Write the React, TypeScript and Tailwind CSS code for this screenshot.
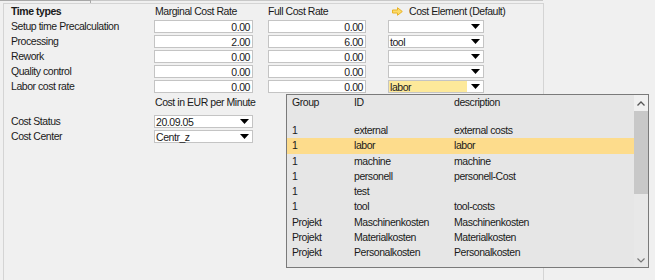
import React from "react";

const font = { fontFamily: '"Liberation Sans", Arial, sans-serif' };

function Arrow() {
  return (
    <svg width="9" height="5" viewBox="0 0 9 5" className="shrink-0">
      <polygon points="0,0 9,0 4.5,5" fill="#000" />
    </svg>
  );
}

function NumBox({ v }: { v: string }) {
  return (
    <div className="h-[13px] bg-white border border-[#c4c4c4] flex items-center justify-end pr-[2px] leading-none">
      {v}
    </div>
  );
}

function SelBox({ v, hl }: { v: string; hl?: boolean }) {
  return (
    <div className="h-[13px] bg-white border border-[#c4c4c4] flex items-center leading-none">
      <div className={"flex-1 h-full flex items-center pl-[1px] " + (hl ? "bg-[#fde99a]" : "")}>{v}</div>
      <div className="w-[16px] h-full flex items-center justify-center">
        <Arrow />
      </div>
    </div>
  );
}

const rows = [
  { l: "Setup time Precalculation", m: "0.00", f: "0.00", e: "" },
  { l: "Processing", m: "2.00", f: "6.00", e: "tool" },
  { l: "Rework", m: "0.00", f: "0.00", e: "" },
  { l: "Quality control", m: "0.00", f: "0.00", e: "" },
  { l: "Labor cost rate", m: "0.00", f: "0.00", e: "labor" },
];

const items = [
  ["1", "external", "external costs"],
  ["1", "labor", "labor"],
  ["1", "machine", "machine"],
  ["1", "personell", "personell-Cost"],
  ["1", "test", ""],
  ["1", "tool", "tool-costs"],
  ["Projekt", "Maschinenkosten", "Maschinenkosten"],
  ["Projekt", "Materialkosten", "Materialkosten"],
  ["Projekt", "Personalkosten", "Personalkosten"],
];

const cols = "grid grid-cols-[143px_99px_15px_98px_22px_96px]";

export default function App() {
  return (
    <div style={font} className="relative w-[655px] h-[280px] bg-[#f0f0f0] overflow-hidden text-[10.5px] tracking-[-0.45px] text-[#1a1a1a] whitespace-nowrap">
      <div className="flex h-[3px]">
        <div className="w-[91px] border-t border-r border-[#a8a8a8]" />
        <div className="w-[452px] border-t border-[#c8c8c8]" />
      </div>
      <div className="ml-[3px] w-[541px] h-[277px] border-l border-t border-r border-[#d4d4d4] pl-[7px]">
        <div className={cols + " h-[15px] items-center"}>
          <div className="font-bold">Time types</div>
          <div className="pl-[1px]">Marginal Cost Rate</div>
          <div />
          <div>Full Cost Rate</div>
          <div />
          <div className="flex items-center gap-[6px] pl-[4px]">
            <svg width="11" height="9" viewBox="0 0 11 9" className="shrink-0">
              <polygon points="0.5,3 5.5,3 5.5,0.7 10.3,4.5 5.5,8.3 5.5,6 0.5,6" fill="#fbdb6a" stroke="#e9b326" strokeWidth="1" />
            </svg>
            <span>Cost Element (Default)</span>
          </div>
        </div>
        {rows.map((r) => (
          <div key={r.l} className={cols + " h-[15px] items-center"}>
            <div>{r.l}</div>
            <NumBox v={r.m} />
            <div />
            <NumBox v={r.f} />
            <div />
            <SelBox v={r.e} hl={r.e === "labor"} />
          </div>
        ))}
        <div className={cols + " h-[18px] items-center"}>
          <div />
          <div className="pl-[1px]">Cost in EUR per Minute</div>
        </div>
        <div className="mt-[2px]">
          <div className={cols + " h-[15px] items-center"}>
            <div>Cost Status</div>
            <SelBox v="20.09.05" />
          </div>
          <div className={cols + " h-[15px] items-center"}>
            <div>Cost Center</div>
            <SelBox v="Centr_z" />
          </div>
        </div>
      </div>

      <div className="absolute left-[286px] top-[94px] w-[363px] h-[174px] border border-[#7a7a7a] bg-[#e6e6e6] flex">
        <div className="flex-1">
          <div className="grid grid-cols-[62px_100px_1fr] h-[13px] items-center pl-[5px]">
            <div>Group</div>
            <div>ID</div>
            <div>description</div>
          </div>
          <div className="h-[15px]" />
          {items.map((it, i) => (
            <div
              key={i}
              className={
                "grid grid-cols-[62px_100px_1fr] h-[15.25px] items-center pl-[5px] " +
                (it[1] === "labor" ? "bg-[#fddc8c]" : "")
              }
            >
              <div>{it[0]}</div>
              <div>{it[1]}</div>
              <div>{it[2]}</div>
            </div>
          ))}
        </div>
        <div className="w-[14px] flex flex-col bg-[#e8e8e8]">
          <div className="h-[16px] bg-[#f0f0f0] flex items-center justify-center">
            <svg width="8" height="5" viewBox="0 0 8 5">
              <polyline points="0.5,4.5 4,1 7.5,4.5" fill="none" stroke="#555" strokeWidth="1.3" />
            </svg>
          </div>
          <div className="h-[83px] bg-[#c8c8c8]" />
          <div className="flex-1" />
          <div className="h-[14px] flex items-center justify-center">
            <svg width="8" height="5" viewBox="0 0 8 5">
              <polyline points="0.5,0.5 4,4 7.5,0.5" fill="none" stroke="#777" strokeWidth="1.2" />
            </svg>
          </div>
        </div>
      </div>
    </div>
  );
}
